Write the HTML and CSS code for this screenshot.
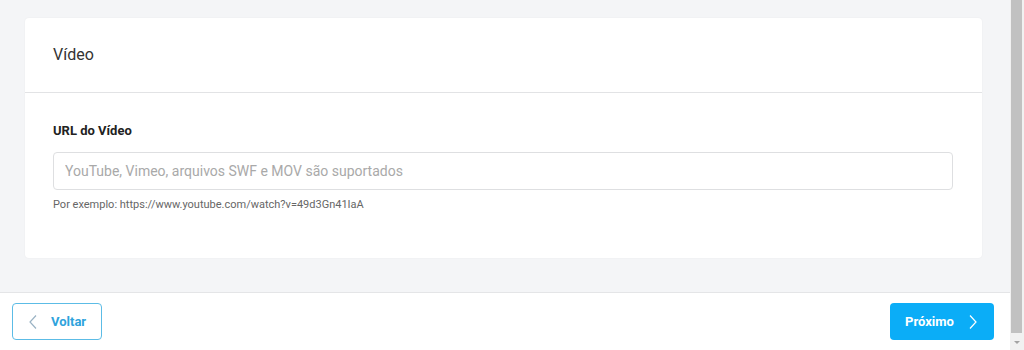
FILE: index.html
```html
<!DOCTYPE html>
<html lang="pt-BR">
<head>
    <meta charset="UTF-8">
    <meta name="viewport" content="width=device-width, initial-scale=1.0">
    <title>Vídeo</title>
    <link rel="stylesheet" href="styles.css">
</head>
<body>
    <div class="page">
        <div class="content">
            <div class="card">
                <div class="card-header">Vídeo</div>
                <div class="card-body">
                    <label class="field-label" for="videoUrl">URL do Vídeo</label>
                    <input class="field-input" id="videoUrl" type="text" placeholder="YouTube, Vimeo, arquivos SWF e MOV são suportados">
                    <p class="field-hint">Por exemplo: https://www.youtube.com/watch?v=49d3Gn41IaA</p>
                </div>
            </div>
        </div>
        <div class="footer">
            <button class="btn btn-back">
                <svg class="chev" width="10" height="16" viewBox="0 0 10 16"><path d="M8 1.5 L2 8 L8 14.5" fill="none" stroke="currentColor" stroke-width="1.2"/></svg>
                Voltar
            </button>
            <button class="btn btn-next">
                Próximo
                <svg class="chev" width="10" height="16" viewBox="0 0 10 16"><path d="M2 1.5 L8 8 L2 14.5" fill="none" stroke="currentColor" stroke-width="1.2"/></svg>
            </button>
        </div>
    </div>
    <div class="scrollbar">
        <div class="thumb"></div>
        <div class="arrow"></div>
    </div>
</body>
</html>
```

FILE: styles.css
```css
html, body {
    margin: 0;
    height: 350px;
    overflow: hidden;
}
body {
    display: flex;
    font-family: Roboto, "Liberation Sans", Arial, sans-serif;
    color: #333;
    background: #f4f5f7;
}
.page {
    flex: 1;
    display: flex;
    flex-direction: column;
}
.content {
    height: 292px;
    box-sizing: border-box;
    padding: 18px 28px 0 25px;
    background: #f4f5f7;
}
.card {
    background: #fff;
    border-radius: 4px;
    height: 240px;
    box-shadow: 0 0 2px rgba(0, 0, 0, 0.06);
}
.card-header {
    height: 75px;
    box-sizing: border-box;
    padding: 27px 28px 0;
    font-size: 16px;
    line-height: 20px;
    color: #333;
    border-bottom: 1px solid #e2e3e5;
}
.card-body {
    padding: 30px 28px 0;
}
.field-label {
    display: block;
    font-size: 13px;
    line-height: 16px;
    font-weight: bold;
    color: #222;
}
.field-input {
    display: block;
    width: 900px;
    height: 38px;
    box-sizing: border-box;
    margin-top: 13px;
    padding: 0 11px;
    border: 1px solid #dedfe1;
    border-radius: 4px;
    font-family: inherit;
    font-size: 14px;
    color: #333;
    outline: none;
}
.field-input::placeholder {
    color: #a9a9a9;
}
.field-hint {
    margin: 8px 0 0;
    font-size: 11px;
    line-height: 14px;
    color: #666;
}
.footer {
    height: 58px;
    box-sizing: border-box;
    border-top: 1px solid #e4e5e7;
    background: #fff;
    display: flex;
    justify-content: space-between;
    padding: 10px 16px 0 12px;
}
.btn {
    height: 37px;
    display: flex;
    align-items: center;
    border-radius: 4px;
    font-family: inherit;
    font-size: 13px;
    font-weight: bold;
    cursor: pointer;
}
.btn-back {
    width: 90px;
    background: #fff;
    border: 1px solid #5cbce6;
    color: #2ea3dc;
    padding: 0 0 0 15px;
    gap: 13px;
}
.btn-back .chev {
    color: #9ab3c4;
}
.btn-next {
    width: 104px;
    background: #0badf7;
    border: none;
    color: #fff;
    padding: 0 0 0 15px;
    gap: 14px;
}
.scrollbar {
    width: 14px;
    height: 350px;
    background: #f1f1f1;
    position: relative;
}
.thumb {
    margin-left: 1px;
    width: 11px;
    height: 333px;
    background: #c1c1c1;
}
.arrow {
    position: absolute;
    left: 4px;
    bottom: 6px;
    width: 0;
    height: 0;
    border-left: 3px solid transparent;
    border-right: 3px solid transparent;
    border-top: 3px solid #a3a3a3;
}
```
